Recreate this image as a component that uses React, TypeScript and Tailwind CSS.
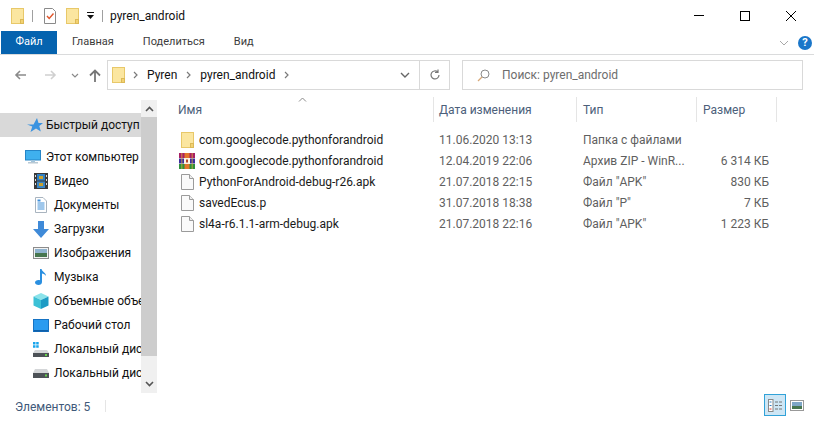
import React from "react";

const Folder = ({ className = "" }: { className?: string }) => (
  <svg viewBox="0 0 13 16" className={className} width="13" height="16">
    <rect x="0.5" y="0.5" width="12" height="15" fill="#fbe6a0" stroke="#e8c869" />
    <rect x="9.500" y="11.500" width="3" height="4" fill="#f3d271" stroke="#dcb957" />
  </svg>
);

const Page = () => (
  <svg viewBox="0 0 13 16" width="13" height="16">
    <path d="M.5.500h8l4 4v11H.5z" fill="#fafafa" stroke="#9b9b9b" />
    <path d="M8.500 .5v4h4" fill="#eee" stroke="#9b9b9b" />
  </svg>
);

const Rar = () => (
  <svg viewBox="0 0 16 16" width="16" height="16">
    <rect y="0" width="16" height="5" fill="#a81f63" />
    <rect y="5.500" width="16" height="5" fill="#3c2f9e" />
    <rect y="11" width="16" height="5" fill="#2f8f3a" />
    <path d="M2 0h1.500v16H2zM12.500 0H14v16h-1.500z" fill="#e0b33a" opacity=".5" />
    <rect x="5.500" y="0" width="5" height="16" fill="#e2772b" />
    <rect x="5" y="5" width="6" height="6" fill="#fbf4e4" />
    <rect x="7" y="6.500" width="2" height="3" fill="#b5462a" />
  </svg>
);

const SideIcon: Record<string, React.ReactNode> = {
  video: (
    <svg viewBox="0 0 14 16" width="14" height="16">
      <rect width="14" height="16" fill="#3a3a3a" />
      <rect x="3" y="1" width="8" height="6.500" fill="#2f7fc4" />
      <rect x="3" y="8.500" width="8" height="6.500" fill="#3b86c6" />
      <rect x="5" y="3" width="4" height="3" fill="#c9a12e" />
      <rect x="5" y="10" width="4" height="3" fill="#c9a12e" />
      <path d="M1 2h1v2H1zM1 6h1v2H1zM1 10h1v2H1zM12 2h1v2h-1zM12 6h1v2h-1zM12 10h1v2h-1z" fill="#ddd" />
    </svg>
  ),
  docs: (
    <svg viewBox="0 0 12 16" width="12" height="16">
      <path d="M.5.500h7.500l3.500 3.500v11.500H.5z" fill="#fff" stroke="#a9b4bf" />
      <path d="M2.500 6h7M2.500 8h7M2.500 10h7M2.500 12h7" stroke="#3f8fd8" />
      <path d="M2.500 2.500h3v2h-3z" fill="#3f8fd8" />
    </svg>
  ),
  down: (
    <svg viewBox="0 0 16 17" width="16" height="17">
      <path d="M5 0h6v8h5l-8 9-8-9h5z" fill="#3f8ad8" />
    </svg>
  ),
  img: (
    <svg viewBox="0 0 16 12" width="16" height="12">
      <rect x=".5" y=".5" width="15" height="11" fill="#f2f2f2" stroke="#8c8c8c" />
      <rect x="2" y="2" width="12" height="4" fill="#8fb3cf" />
      <rect x="2" y="6" width="12" height="4" fill="#47764f" />
    </svg>
  ),
  music: (
    <svg viewBox="0 0 12 16" width="12" height="16">
      <path d="M5 0h1.600c.3 3 4.400 3.500 4.400 7-1-1.600-2.500-2.200-4-2.400V13c0 1.800-1.500 3-3.500 3S0 15 0 13.500 1.500 11 3.500 11c.6 0 1 .1 1.500.3z" fill="#2a8fe0" />
    </svg>
  ),
  cube: (
    <svg viewBox="0 0 16 16" width="16" height="16">
      <path d="M8 0l7.500 3.500L8 7 .5 3.500z" fill="#8be3ea" />
      <path d="M.5 3.500L8 7v9l-7.500-3.500z" fill="#3cc1d6" />
      <path d="M15.500 3.500L8 7v9l7.500-3.500z" fill="#1c9bc4" />
    </svg>
  ),
  desk: (
    <svg viewBox="0 0 16 13" width="16" height="13">
      <rect x=".5" y=".5" width="15" height="12" fill="#2a9bf0" stroke="#1673c4" />
      <rect x="1" y="11" width="14" height="1.500" fill="#0f5fa8" />
    </svg>
  ),
  winDisk: (
    <svg viewBox="0 0 16 15" width="16" height="15">
      <path d="M0 0h2.500v2.500H0zM3.200 0h2.500v2.500H3.200zM0 3.200h2.500v2.500H0zM3.200 3.200h2.500v2.500H3.200z" fill="#19a5ec" />
      <path d="M2 8h12l2 3H0z" fill="#d4d6d8" />
      <rect y="11" width="16" height="4" fill="#4d5257" />
      <rect x="12" y="12" width="2" height="2" fill="#67d34b" />
    </svg>
  ),
  disk: (
    <svg viewBox="0 0 16 9" width="16" height="9">
      <path d="M2 0h12l2 4H0z" fill="#d4d6d8" />
      <rect y="4" width="16" height="5" fill="#4d5257" />
      <rect x="12" y="5.500" width="2" height="2" fill="#67d34b" />
    </svg>
  ),
};

const nav = [
  ["video", "Видео"],
  ["docs", "Документы"],
  ["down", "Загрузки"],
  ["img", "Изображения"],
  ["music", "Музыка"],
  ["cube", "Объемные объекты"],
  ["desk", "Рабочий стол"],
  ["winDisk", "Локальный диск (C:)"],
  ["disk", "Локальный диск (D:)"],
];

const files = [
  ["folder", "com.googlecode.pythonforandroid", "11.06.2020 13:13", "Папка с файлами", ""],
  ["rar", "com.googlecode.pythonforandroid", "12.04.2019 22:06", "Архив ZIP - WinR...", "6 314 КБ"],
  ["page", "PythonForAndroid-debug-r26.apk", "21.07.2018 22:15", 'Файл "APK"', "830 КБ"],
  ["page", "savedEcus.p", "31.07.2018 18:38", 'Файл "P"', "7 КБ"],
  ["page", "sl4a-r6.1.1-arm-debug.apk", "21.07.2018 22:16", 'Файл "APK"', "1 223 КБ"],
];

const Crumb = ({ className = "" }: { className?: string }) => (
  <svg viewBox="0 0 5 8" width="5" height="8" className={className}>
    <path d="M1 1l3 3-3 3" fill="none" stroke="#7a7a7a" strokeWidth="1.200" />
  </svg>
);

export default function App() {
  return (
    <div
      className="w-[814px] h-[423px] bg-white flex flex-col overflow-hidden text-[12px] text-[#1a1a1a]"
      style={{ fontFamily: 'Roboto, "Noto Sans", sans-serif' }}
    >
      {/* title bar */}
      <div className="h-[31px] flex items-center pl-[11px]">
        <Folder />
        <div className="w-px h-[12px] bg-[#a0a0a0] ml-[8px]" />
        <svg viewBox="0 0 12 16" width="12" height="16" className="ml-[11px]">
          <path d="M.5.500h8l3 3v12H.5z" fill="#fff" stroke="#8a8a8a" />
          <path d="M3 8l2.200 2.500L9.500 5.500" fill="none" stroke="#e0552b" strokeWidth="1.400" />
        </svg>
        <Folder className="ml-[10px]" />
        <svg viewBox="0 0 7 8" width="7" height="8" className="ml-[8px]">
          <path d="M0 0h7v1H0zM0 3h7L3.500 7z" fill="#111" />
        </svg>
        <div className="w-px h-[12px] bg-[#a0a0a0] ml-[8px]" />
        <span className="ml-[7px] text-[#111]">pyren_android</span>
        <div className="ml-auto flex items-center">
          <div className="w-[46px] h-[31px] flex items-center justify-center">
            <div className="w-[10px] h-px bg-black" />
          </div>
          <div className="w-[46px] h-[31px] flex items-center justify-center">
            <div className="w-[10px] h-[10px] border border-black" />
          </div>
          <div className="w-[46px] h-[31px] flex items-center justify-center">
            <svg viewBox="0 0 10 10" width="10" height="10">
              <path d="M0 0l10 10M10 0L0 10" stroke="#000" />
            </svg>
          </div>
        </div>
      </div>

      {/* ribbon tabs */}
      <div className="h-[24px] flex items-center border-b border-[#dadbdc] pl-px shrink-0 text-[11px]">
        <div className="w-[56px] h-[23px] bg-[#0563af] text-white flex items-center justify-center">Файл</div>
        <span className="ml-[15px] text-[#3c3c3c]">Главная</span>
        <span className="ml-[29px] text-[#3c3c3c]">Поделиться</span>
        <span className="ml-[29px] text-[#3c3c3c]">Вид</span>
        <div className="ml-auto flex items-center pr-[2px]">
          <svg viewBox="0 0 10 6" width="10" height="6" className="mr-[9px]">
            <path d="M1 1l4 4 4-4" fill="none" stroke="#a9a9a9" />
          </svg>
          <div className="w-[14px] h-[14px] rounded-full bg-[#1a76c9] text-white font-bold text-[11px] leading-[14px] text-center">?</div>
        </div>
      </div>

      {/* address row */}
      <div className="h-[30px] flex items-center mt-[5px] shrink-0">
        <div className="w-[107px] flex items-center pl-[14px]">
          <svg viewBox="0 0 13 12" width="13" height="12">
            <path d="M12 6H2M6 2L2 6l4 4" fill="none" stroke="#8a8a8a" strokeWidth="1.600" />
          </svg>
          <svg viewBox="0 0 13 12" width="13" height="12" className="ml-[17px]">
            <path d="M1 6h10M7 2l4 4-4 4" fill="none" stroke="#d0d0d0" strokeWidth="1.600" />
          </svg>
          <svg viewBox="0 0 8 5" width="8" height="5" className="ml-[14px]">
            <path d="M1 1l3 3 3-3" fill="none" stroke="#8a8a8a" strokeWidth="1.200" />
          </svg>
          <svg viewBox="0 0 12 13" width="12" height="13" className="ml-[10px]">
            <path d="M6 13V2M1 6.500L6 1.500l5 5" fill="none" stroke="#777" strokeWidth="1.800" />
          </svg>
        </div>
        <div className="w-[343px] h-[30px] border border-[#d9d9d9] flex items-center pl-[4px]">
          <Folder />
          <Crumb className="ml-[8px]" />
          <span className="ml-[9px] text-[#111]">Pyren</span>
          <Crumb className="ml-[9px]" />
          <span className="ml-[9px] text-[#111]">pyren_android</span>
          <Crumb className="ml-[9px]" />
          <svg viewBox="0 0 10 6" width="10" height="6" className="ml-auto mr-[9px]">
            <path d="M1 1l4 4 4-4" fill="none" stroke="#666" strokeWidth="1.400" />
          </svg>
          <div className="w-[30px] h-[28px] border-l border-[#d9d9d9] flex items-center justify-center">
            <svg viewBox="0 0 12 12" width="12" height="12">
              <path d="M10 6a4 4 0 1 1-1.300-3M9 .5V3.500H6" fill="none" stroke="#777" strokeWidth="1.200" />
            </svg>
          </div>
        </div>
        <div className="ml-[12px] w-[341px] h-[30px] border border-[#d9d9d9] flex items-center pl-[14px] text-[#6d6d6d]">
          <svg viewBox="0 0 13 13" width="13" height="13">
            <circle cx="8" cy="5" r="4" fill="none" stroke="#8a8a8a" />
            <path d="M5 8l-4 4" stroke="#d8a878" strokeWidth="1.200" />
          </svg>
          <span className="ml-[12px]">Поиск: pyren_android</span>
        </div>
      </div>

      {/* body */}
      <div className="flex flex-1 min-h-0 mt-[7px]">
        <div className="w-[157px] shrink-0 flex h-[293px] mt-[3px]">
          <div className="w-[141px] overflow-hidden shrink-0 pt-[13px]">
            <div className="h-[24px] bg-[#d9d9d9] flex items-center pl-[27px]">
              <svg viewBox="0 0 16 15" width="16" height="15" className="shrink-0">
                <path d="M10 0l1.500 5H16l-3.700 3 1.500 5.500L9 10.500 3.500 14l1.800-5.500L0 6.500h6.500z" fill="#3a93e0" />
              </svg>
              <span className="ml-[3px] whitespace-nowrap text-[#111]">Быстрый доступ</span>
            </div>
            <div className="h-[24px] mt-[8px] flex items-center pl-[25px]">
              <svg viewBox="0 0 16 14" width="16" height="14" className="shrink-0">
                <rect x=".5" y=".5" width="15" height="9.500" fill="#3fb0ee" stroke="#2585c7" />
                <rect x="6" y="10" width="4" height="2" fill="#a0c4dc" />
                <rect x="3" y="12" width="10" height="1.500" fill="#b9c9d4" />
              </svg>
              <span className="ml-[5px] whitespace-nowrap text-[#111]">Этот компьютер</span>
            </div>
            {nav.map(([icon, label]) => (
              <div key={label} className="h-[24px] flex items-center pl-[33px]">
                <div className="w-[16px] mr-[5px] shrink-0 flex justify-center">{SideIcon[icon]}</div>
                <span className="whitespace-nowrap text-[#111]">{label}</span>
              </div>
            ))}
          </div>
          <div className="w-[16px] bg-[#f0f0f0] flex flex-col">
            <div className="h-[17px] flex items-center justify-center">
              <svg viewBox="0 0 9 6" width="9" height="6">
                <path d="M1 5l3.500-3.500L8 5" fill="none" stroke="#555" strokeWidth="1.600" />
              </svg>
            </div>
            <div className="h-[239px] bg-[#cdcdcd]" />
            <div className="flex-1 flex items-end justify-center pb-[6px]">
              <svg viewBox="0 0 9 6" width="9" height="6">
                <path d="M1 1l3.500 3.500L8 1" fill="none" stroke="#555" strokeWidth="1.600" />
              </svg>
            </div>
          </div>
        </div>

        <div className="flex-1 flex flex-col">
          <div className="flex h-[25px] relative text-[#4c607a]">
            <svg viewBox="0 0 9 5" width="9" height="5" className="absolute left-[141px] top-0">
              <path d="M1 4.500L4.500 1 8 4.500" fill="none" stroke="#8a8a8a" />
            </svg>
            <div className="w-[276px] pl-[21px] flex items-center">Имя</div>
            <div className="w-[143px] pl-[5px] border-l border-[#e5e5e5] flex items-center">Дата изменения</div>
            <div className="w-[120px] pl-[6px] border-l border-[#e5e5e5] flex items-center">Тип</div>
            <div className="w-[81px] pl-[6px] border-l border-r border-[#e5e5e5] flex items-center">Размер</div>
          </div>
          <div className="mt-[7px]">
            {files.map(([kind, name, date, type, size], i) => (
              <div key={i} className="flex h-[21px] items-center text-[#5f5f5f]">
                <div className="w-[276px] pl-[22px] flex items-center text-[#1a1a1a]">
                  <div className="w-[16px] flex justify-center shrink-0">
                    {kind === "folder" ? <Folder /> : kind === "rar" ? <Rar /> : <Page />}
                  </div>
                  <span className="ml-[4px] whitespace-nowrap">{name}</span>
                </div>
                <div className="w-[144px] pl-[6px]">{date}</div>
                <div className="w-[112px] pl-[6px] whitespace-nowrap">{type}</div>
                <div className="w-[80px] text-right">{size}</div>
              </div>
            ))}
          </div>
        </div>
      </div>

      {/* status bar */}
      <div className="h-[30px] shrink-0 flex items-start pt-[1px] pl-[15px] text-[#3f5a7a]">
        <span className="mt-[4px]">Элементов: 5</span>
        <div className="w-px h-[12px] bg-[#e5e5e5] ml-[15px] mt-[6px]" />
        <div className="ml-auto flex items-center pr-[6px]">
          <div className="w-[22px] h-[22px] border border-[#31a2d8] bg-[#cde6f5] flex items-center justify-center">
            <svg viewBox="0 0 15 13" width="15" height="13">
              <rect x=".5" y=".5" width="4.500" height="12" fill="#fff" stroke="#888" />
              <path d="M1.500 3h2M1.500 6.500h2" stroke="#2f7fc4" />
              <path d="M1.500 10h2" stroke="#d9362b" />
              <path d="M7 3h3M11 3h3M7 6.500h3M11 6.500h3M7 10h3M11 10h3" stroke="#777" />
            </svg>
          </div>
          <div className="w-[22px] h-[22px] flex items-center justify-center">
            <svg viewBox="0 0 14 11" width="14" height="11">
              <rect x=".5" y=".5" width="13" height="10" fill="#fff" stroke="#999" />
              <rect x="2" y="2" width="10" height="4" fill="#7ea6c6" />
              <rect x="2" y="6" width="10" height="3" fill="#47764f" />
            </svg>
          </div>
        </div>
      </div>
    </div>
  );
}
